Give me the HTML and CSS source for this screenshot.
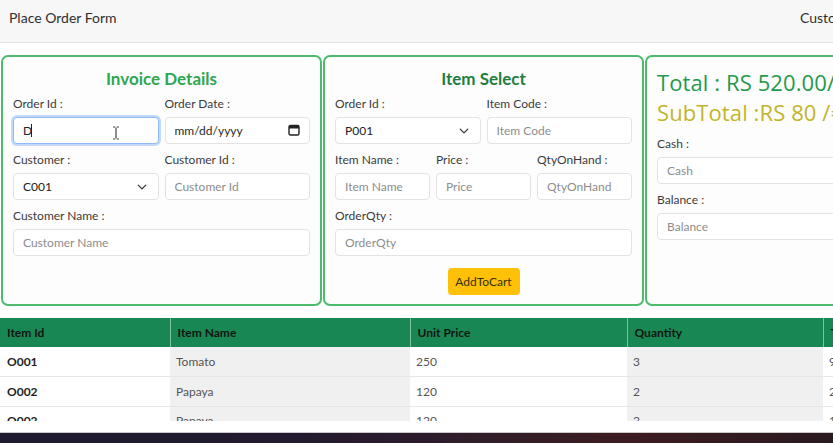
FILE: index.html
```html
<!DOCTYPE html>
<html lang="en">
<head>
<meta charset="utf-8">
<title>Place Order Form</title>
<link rel="stylesheet" href="styles.css">
</head>
<body>
<div class="screen">
  <nav class="navbar">
    <span class="brand">Place Order Form</span>
    <span class="nav-link">Customer Form</span>
  </nav>
  <main class="content">
    <section class="cards">
      <div class="card">
        <h3 class="card-title title-invoice">Invoice Details</h3>
        <div class="form-grid">
          <div class="field span-3">
            <label>Order Id :</label>
            <div class="input-wrap">
              <input class="form-control focused" type="text" value="D">
              <span class="caret"></span>
              <svg class="ibeam" width="8" height="14" viewBox="0 0 8 14"><path d="M1 1h2.2M4.8 1H7M4 1.5v11M1 13h2.2M4.8 13H7" stroke="#444" stroke-width="1.2" fill="none"/></svg>
            </div>
          </div>
          <div class="field span-3">
            <label>Order Date :</label>
            <div class="input-wrap">
              <input class="form-control date" type="text" value="mm/dd/yyyy" readonly>
              <svg class="cal" width="12" height="12" viewBox="0 0 12 12"><rect x="1" y="1.5" width="10" height="9.5" rx="1.5" fill="none" stroke="#222" stroke-width="1.4"/><rect x="1" y="1.5" width="10" height="3" fill="#222"/></svg>
            </div>
          </div>
          <div class="field span-3">
            <label>Customer :</label>
            <div class="input-wrap">
              <select class="form-control form-select"><option>C001</option></select>
              <svg class="chev" width="10" height="10" viewBox="0 0 16 16"><path d="M2 5l6 6 6-6" stroke="#343a40" stroke-width="2.2" fill="none" stroke-linecap="round" stroke-linejoin="round"/></svg>
            </div>
          </div>
          <div class="field span-3">
            <label>Customer Id :</label>
            <input class="form-control" type="text" placeholder="Customer Id">
          </div>
          <div class="field span-6">
            <label>Customer Name :</label>
            <input class="form-control" type="text" placeholder="Customer Name">
          </div>
        </div>
      </div>

      <div class="card">
        <h3 class="card-title title-item">Item Select</h3>
        <div class="form-grid">
          <div class="field span-3">
            <label>Order Id :</label>
            <div class="input-wrap">
              <select class="form-control form-select"><option>P001</option></select>
              <svg class="chev" width="10" height="10" viewBox="0 0 16 16"><path d="M2 5l6 6 6-6" stroke="#343a40" stroke-width="2.2" fill="none" stroke-linecap="round" stroke-linejoin="round"/></svg>
            </div>
          </div>
          <div class="field span-3">
            <label>Item Code :</label>
            <input class="form-control" type="text" placeholder="Item Code">
          </div>
          <div class="field span-2">
            <label>Item Name :</label>
            <input class="form-control" type="text" placeholder="Item Name">
          </div>
          <div class="field span-2">
            <label>Price :</label>
            <input class="form-control" type="text" placeholder="Price">
          </div>
          <div class="field span-2">
            <label>QtyOnHand :</label>
            <input class="form-control" type="text" placeholder="QtyOnHand">
          </div>
          <div class="field span-6">
            <label>OrderQty :</label>
            <input class="form-control" type="text" placeholder="OrderQty">
          </div>
        </div>
        <div class="btn-row"><button class="btn-cart" type="button">AddToCart</button></div>
      </div>

      <div class="card">
        <h2 class="total">Total : RS 520.00/=</h2>
        <h2 class="subtotal">SubTotal :RS 80 /=</h2>
        <div class="form-grid summary">
          <div class="field span-6">
            <label>Cash :</label>
            <input class="form-control" type="text" placeholder="Cash">
          </div>
          <div class="field span-6">
            <label>Balance :</label>
            <input class="form-control" type="text" placeholder="Balance">
          </div>
        </div>
      </div>
    </section>

    <table class="orders">
      <colgroup>
        <col class="w1"><col class="w2"><col class="w3"><col class="w4"><col class="w5">
      </colgroup>
      <thead>
        <tr><th>Item Id</th><th>Item Name</th><th>Unit Price</th><th>Quantity</th><th>Total</th></tr>
      </thead>
      <tbody>
        <tr><td>O001</td><td>Tomato</td><td>250</td><td>3</td><td>900</td></tr>
        <tr><td>O002</td><td>Papaya</td><td>120</td><td>2</td><td>240</td></tr>
        <tr><td>O002</td><td>Papaya</td><td>120</td><td>2</td><td>120</td></tr>
      </tbody>
    </table>
  </main>
</div>
<div class="window-edge"></div>
<div class="taskbar"></div>
</body>
</html>
```
FILE: styles.css
```css
* { box-sizing: border-box; }
html, body { margin: 0; padding: 0; }
body {
  width: 833px;
  height: 443px;
  overflow: hidden;
  background: #fff;
  font-family: Lato, "Open Sans", sans-serif;
  color: #333;
}
.screen {
  height: 421px;
  overflow: hidden;
  background: #fff;
}
.navbar {
  width: 1100px;
  height: 43px;
  display: grid;
  grid-template-columns: 791px auto;
  align-items: start;
  padding: 9px 0 0 9px;
  background: #f7f7f7;
  border-bottom: 1px solid #e3e3e3;
  font-size: 14px;
  line-height: 17px;
  color: #2f2f2f;
  white-space: nowrap;
}
.content { padding-top: 12px; }
.cards {
  width: 1100px;
  display: flex;
  gap: 1px;
  padding-left: 1px;
}
.card {
  flex: 0 0 321px;
  height: 251px;
  border: 2px solid #4dba6c;
  border-radius: 7px;
  padding: 10px;
  background: #fdfdfd;
}
.card-title {
  margin: 0 0 4px;
  text-align: center;
  font-size: 17px;
  line-height: 24px;
  font-weight: 700;
}
.title-invoice { color: #2fa650; }
.title-item { color: #1f7d3f; }
.total, .subtotal {
  margin: 0;
  font-family: "Open Sans", Lato, sans-serif;
  font-size: 22px;
  line-height: 30px;
  font-weight: 500;
  white-space: nowrap;
  letter-spacing: 0.1px;
}
.total { color: #239a4b; }
.subtotal { color: #c2b52a; }
.summary { margin-top: 8px; }
.form-grid {
  display: grid;
  grid-template-columns: repeat(6, 1fr);
  column-gap: 6px;
  row-gap: 7px;
}
.span-2 { grid-column: span 2; }
.span-3 { grid-column: span 3; }
.span-6 { grid-column: span 6; }
.field label {
  display: block;
  font-size: 12px;
  line-height: 17px;
  margin-bottom: 5px;
  color: #3b3b3b;
}
.input-wrap { position: relative; }
.form-control {
  display: block;
  width: 100%;
  height: 27px;
  margin: 0;
  padding: 0 9px;
  border: 1px solid #e3e3e3;
  border-radius: 4px;
  background: #fff;
  font-family: Lato, "Open Sans", sans-serif;
  font-size: 12px;
  color: #222;
  outline: none;
}
.form-control::placeholder { color: #8d8d8d; }
.form-control.focused {
  border-color: #8fbaf5;
  box-shadow: 0 0 0 2px rgba(13, 110, 253, 0.25);
}
.form-select {
  appearance: none;
  -webkit-appearance: none;
}
.date { color: #2a2a2a; }
.cal {
  position: absolute;
  right: 10px;
  top: 7px;
  pointer-events: none;
}
.chev {
  position: absolute;
  right: 12px;
  top: 9px;
  pointer-events: none;
}
.caret {
  position: absolute;
  left: 18px;
  top: 7px;
  width: 1px;
  height: 13px;
  background: #222;
}
.ibeam {
  position: absolute;
  left: 99px;
  top: 9px;
}
.btn-row {
  margin-top: 12px;
  text-align: center;
}
.btn-cart {
  height: 27px;
  width: 72px;
  padding: 0;
  border: none;
  border-radius: 4px;
  background: #ffc107;
  color: #3a2f05;
  font-family: Lato, "Open Sans", sans-serif;
  font-size: 12px;
}
.orders {
  margin-top: 12px;
  width: 1023px;
  border-collapse: collapse;
  table-layout: fixed;
  font-size: 12px;
}
.w1 { width: 170px; }
.w2 { width: 240px; }
.w3 { width: 217px; }
.w4 { width: 196px; }
.w5 { width: 200px; }
.orders th {
  height: 29px;
  padding: 0 7px;
  background: #198754;
  color: #101510;
  font-weight: 700;
  text-align: left;
  border-right: 1px solid #7cc49b;
}
.orders td {
  height: 29.5px;
  padding: 0 6px;
  border-bottom: 1px solid #e6e6e6;
  color: #555;
}
.orders td:first-child {
  padding-left: 7px;
  font-weight: 700;
  color: #1e1e1e;
}
.orders td:nth-child(2),
.orders td:nth-child(4) { background: #f0f0f0; }
.window-edge {
  height: 12px;
  background: #fff;
  border-bottom: 1px solid #c9c9c9;
}
.taskbar {
  height: 10px;
  background: linear-gradient(90deg, #1e1a30 0%, #221a2e 35%, #2e1d2a 55%, #3c1c20 75%, #2a1a20 100%);
}
```
